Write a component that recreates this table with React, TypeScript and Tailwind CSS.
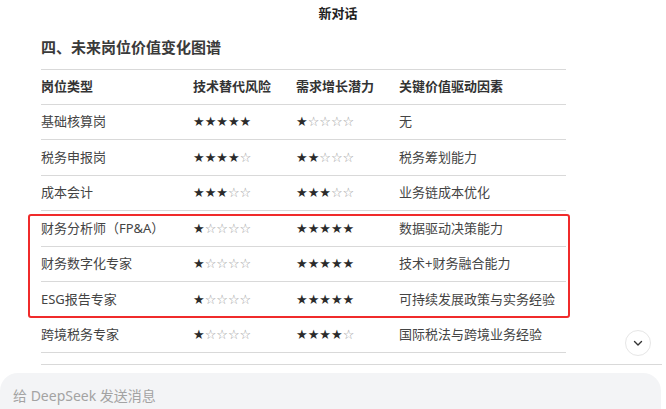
import React from "react";

const rows: [string, number, number, string][] = [
  ["基础核算岗", 5, 1, "无"],
  ["税务申报岗", 4, 2, "税务筹划能力"],
  ["成本会计", 3, 3, "业务链成本优化"],
  ["财务分析师（FP&A）", 1, 5, "数据驱动决策能力"],
  ["财务数字化专家", 1, 5, "技术+财务融合能力"],
  ["ESG报告专家", 1, 5, "可持续发展政策与实务经验"],
  ["跨境税务专家", 1, 4, "国际税法与跨境业务经验"],
];

function Stars({ n }: { n: number }) {
  return (
    <span className="text-[13px] leading-none" style={{ fontFamily: '"DejaVu Sans", sans-serif' }}>
      <span className="text-[#2b2b2b]">{"★".repeat(n)}</span>
      <span className="text-[#9a9a9a]">{"☆".repeat(5 - n)}</span>
    </span>
  );
}

export default function App() {
  return (
    <div
      className="relative w-[666px] h-[409px] overflow-hidden bg-white flex flex-col"
      style={{ fontFamily: '"Noto Sans", "Noto Sans CJK SC", sans-serif' }}
    >
      <div className="pt-[4px] pl-[10px] text-center text-[13px] leading-[18px] font-semibold text-[#222]">新对话</div>
      <div className="mt-[15px] ml-[41px] text-[15px] leading-[20px] font-bold text-[#3a3a3a]">四、未来岗位价值变化图谱</div>
      <div className="relative mt-[12px] ml-[41px] w-[525px] border-t border-[#d9d9d9]">
        <div className="grid grid-cols-[152px_103px_103px_1fr] items-center h-[35px] border-b border-[#d9d9d9] text-[13px] font-semibold text-[#333]">
          <div>岗位类型</div>
          <div>技术替代风险</div>
          <div>需求增长潜力</div>
          <div>关键价值驱动因素</div>
        </div>
        {rows.map((r) => (
          <div
            key={r[0]}
            className="grid grid-cols-[152px_103px_103px_1fr] items-center h-[35.43px] border-b border-[#d9d9d9] text-[13px] text-[#444]"
          >
            <div>{r[0]}</div>
            <div>
              <Stars n={r[1]} />
            </div>
            <div>
              <Stars n={r[2]} />
            </div>
            <div>{r[3]}</div>
          </div>
        ))}
        <div className="absolute left-[-13px] top-[144px] w-[542px] h-[104px] border-2 border-[#f02b2b] rounded-[3px]" />
      </div>
      <div className="mt-[11px] ml-[41px] w-[621px] border-t border-[#d9d9d9]" />
      <div className="mt-[8px] w-[661px] flex-1 bg-[#f3f4f6] rounded-t-[18px] pt-[13px] pl-[13px] text-[14px] leading-[20px] text-[#a3a3a3]">
        给 DeepSeek 发送消息
      </div>
      <div className="absolute left-[625px] top-[330px] w-[26px] h-[26px] rounded-full bg-white border border-[#e6e6e6] flex items-center justify-center">
        <svg width="12" height="12" viewBox="0 0 24 24" fill="none" stroke="#333" strokeWidth="2.8" strokeLinecap="round" strokeLinejoin="round">
          <path d="M5 9l7 7 7-7" />
        </svg>
      </div>
    </div>
  );
}
